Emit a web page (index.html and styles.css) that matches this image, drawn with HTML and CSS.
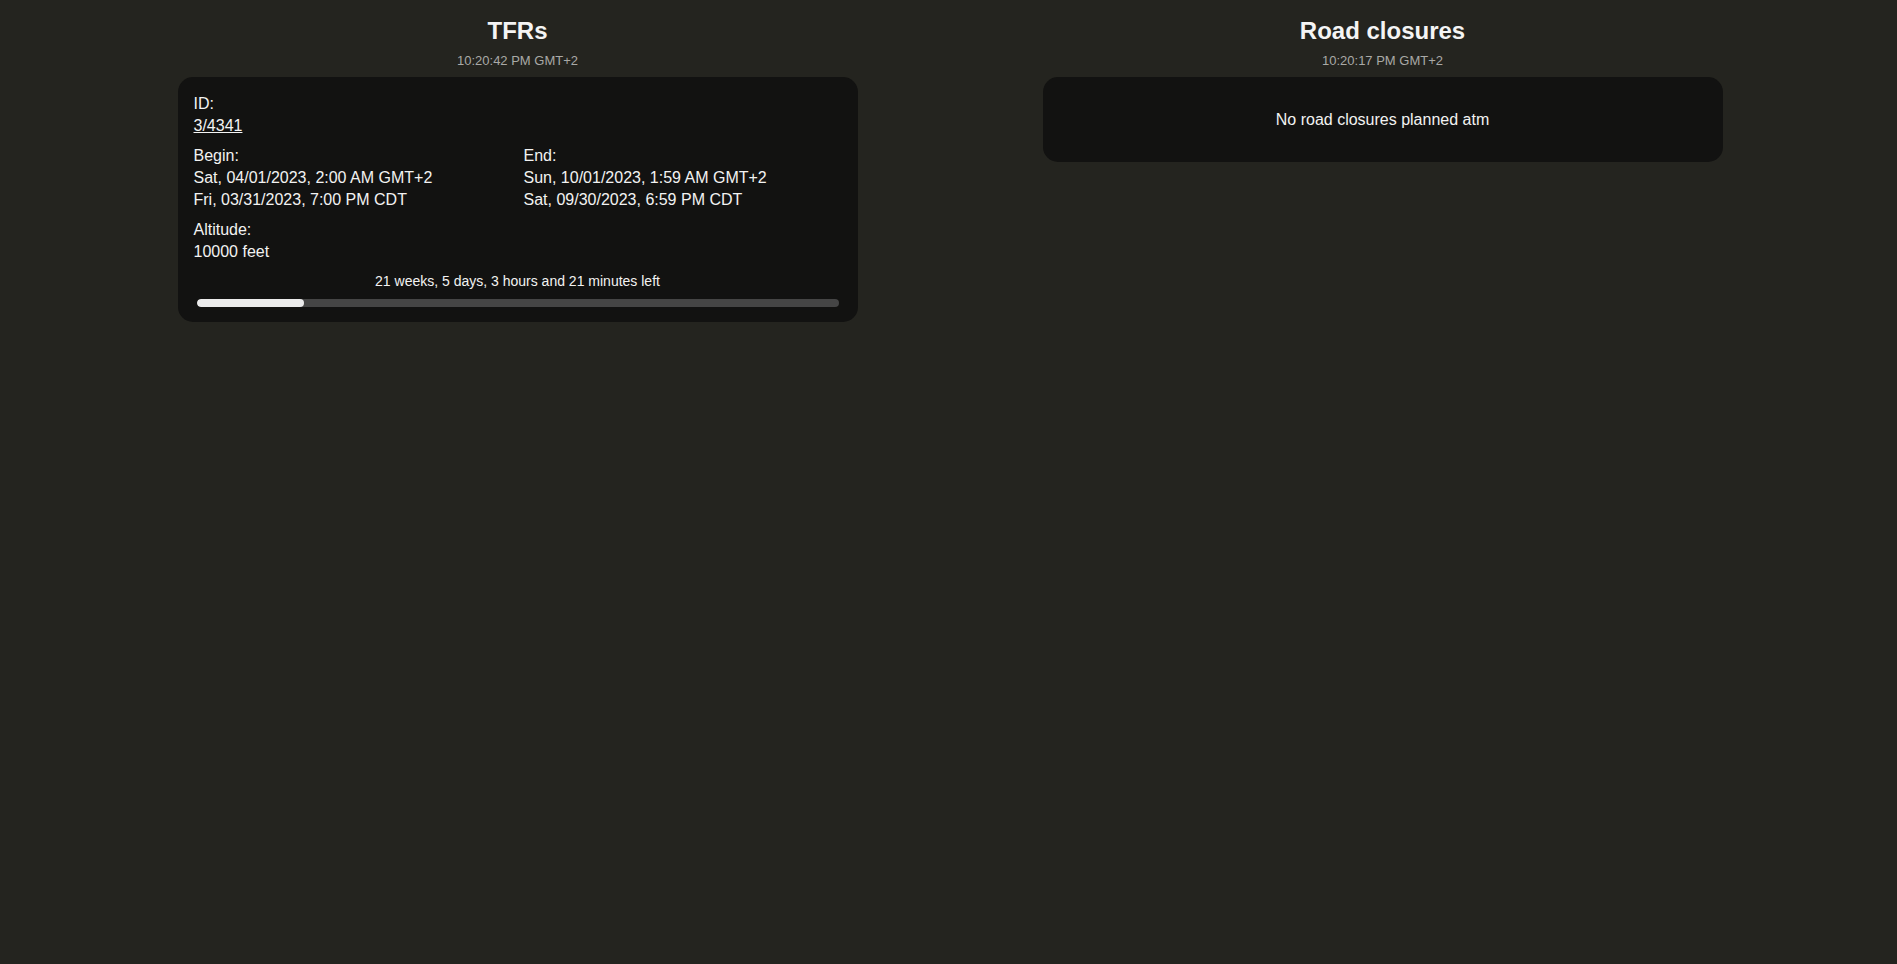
FILE: index.html
```html
<!DOCTYPE html>
<html>
<head>
	<title>Starbase Status</title>
	<meta name="viewport" content="width=device-width, initial-scale=1">
	<link rel="stylesheet" href="styles.css">
</head>
<body>
	<main class="board">
		<!-- TFRs -->
		<section class="panel">
			<h2 class="panel-title">TFRs</h2>
			<div class="panel-time">10:20:42 PM GMT+2</div>
			<div class="card">
				<div class="field">
					<div>ID:</div>
					<a class="field-link" href="#">3/4341</a>
				</div>
				<div class="field-row">
					<div class="field">
						<div>Begin:</div>
						<div>Sat, 04/01/2023, 2:00 AM GMT+2</div>
						<div>Fri, 03/31/2023, 7:00 PM CDT</div>
					</div>
					<div class="field">
						<div>End:</div>
						<div>Sun, 10/01/2023, 1:59 AM GMT+2</div>
						<div>Sat, 09/30/2023, 6:59 PM CDT</div>
					</div>
				</div>
				<div class="field">
					<div>Altitude:</div>
					<div>10000 feet</div>
				</div>
				<div class="remaining">21 weeks, 5 days, 3 hours and 21 minutes left</div>
				<div class="progress">
					<div class="progress-fill" style="width: 16.8%"></div>
				</div>
			</div>
		</section>

		<!-- Road closures -->
		<section class="panel">
			<h2 class="panel-title">Road closures</h2>
			<div class="panel-time">10:20:17 PM GMT+2</div>
			<div class="card card-empty">No road closures planned atm</div>
		</section>
	</main>
</body>
</html>
```
FILE: styles.css
```css
body {
  margin: 0;
  background-color: #24241f; /* dark page background */
  color: #f2f2f2;
  font-family: "Liberation Sans", Arial, sans-serif;
}

.board {
  display: grid;
  grid-template-columns: 680px 680px;
  column-gap: 185px;
  justify-content: center;
  padding-top: 17px;
  padding-left: 3px;
}

.panel-title {
  margin: 0;
  font-size: 24px;
  line-height: 28px;
  font-weight: bold;
  text-align: center;
  color: #f4f4f4;
}

.panel-time {
  margin-top: 8px;
  font-size: 13px;
  line-height: 15px;
  text-align: center;
  color: #a9a9a6;
}

.card {
  margin-top: 9px;
  padding: 16px 16px 15px 16px;
  background-color: #121211;
  border-radius: 15px;
  font-size: 16px;
  line-height: 22px;
}

.card-empty {
  padding: 32px 16px;
  line-height: 21px;
  text-align: center;
}

.field {
  margin-bottom: 8px;
}

.field-row {
  display: grid;
  grid-template-columns: 1fr 1fr;
  column-gap: 12px;
}

.field-link {
  color: #f4f4f4;
  text-decoration: underline;
}

.remaining {
  margin-top: 0;
  font-size: 14px;
  line-height: 20px;
  text-align: center;
}

.progress {
  margin: 8px 3px 0 3px;
  height: 8px;
  border-radius: 4px;
  background-color: #454545;
  overflow: hidden;
}

.progress-fill {
  height: 100%;
  border-radius: 4px;
  background-color: #ebebeb;
}
```
